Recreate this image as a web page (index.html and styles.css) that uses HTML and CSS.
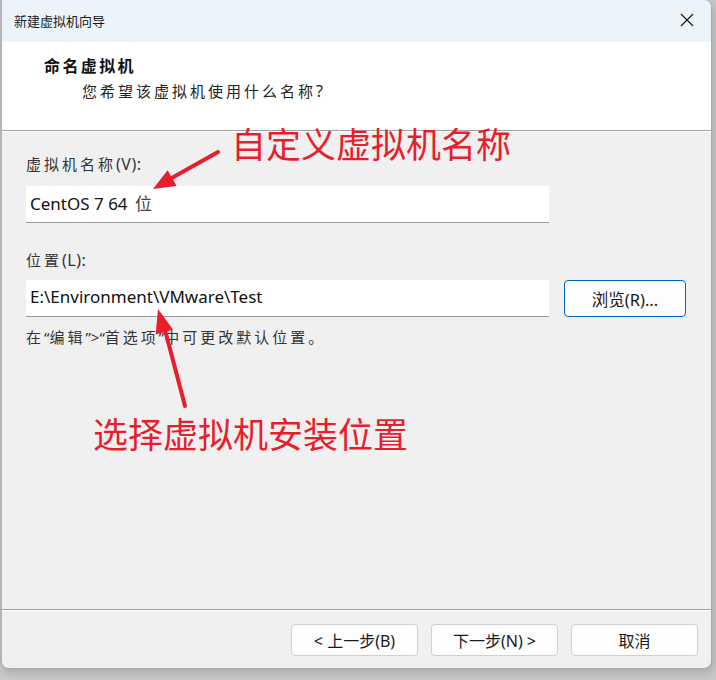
FILE: index.html
```html
<!DOCTYPE html>
<html lang="zh-CN">
<head>
  <meta charset="UTF-8">
  <title>新建虚拟机向导</title>
  <link rel="stylesheet" href="styles.css">
</head>
<body>
  <div class="window">
    <div class="titlebar">
      <span class="title">新建虚拟机向导</span>
      <svg class="close" width="14" height="14" viewBox="0 0 14 14">
        <path d="M1 1 L13 13 M13 1 L1 13" stroke="#1a1a1a" stroke-width="1.2" fill="none"/>
      </svg>
    </div>

    <div class="header">
      <div class="heading">命名虚拟机</div>
      <div class="subheading">您希望该虚拟机使用什么名称<span class="latin">?</span></div>
    </div>

    <div class="content">
      <div class="label">虚拟机名称<span class="latin">(V):</span></div>
      <div class="field">CentOS 7 64 <span class="cjk">位</span></div>

      <div class="label label-2">位置<span class="latin">(L):</span></div>
      <div class="row">
        <div class="field">E:\Environment\VMware\Test</div>
        <button class="btn browse">浏览(R)...</button>
      </div>
      <div class="hint">在<span class="q">“</span>编辑<span class="q">”&gt;“</span>首选项<span class="q">”</span>中可更改默认位置。</div>
    </div>

    <div class="footer">
      <button class="btn">&lt; 上一步(B)</button>
      <button class="btn">下一步(N) &gt;</button>
      <button class="btn">取消</button>
    </div>
  </div>

  <!-- 标注：红色文字和箭头 -->
  <div class="note note-name">自定义虚拟机名称</div>
  <div class="note note-path">选择虚拟机安装位置</div>
  <svg class="arrows" width="716" height="680" viewBox="0 0 716 680">
    <line x1="218" y1="152" x2="170" y2="179" stroke="#ea1d2c" stroke-width="4" stroke-linecap="round"/>
    <polygon points="153,189 167.6,170.3 176.6,185.9" fill="#ea1d2c"/>
    <line x1="185" y1="406" x2="165" y2="330" stroke="#ea1d2c" stroke-width="4" stroke-linecap="round"/>
    <polygon points="158,309 173.1,329.7 155.7,334.5" fill="#ea1d2c"/>
  </svg>
</body>
</html>
```

FILE: styles.css
```css
body {
  margin: 0;
  width: 716px;
  height: 680px;
  background: #c9c9c9;
  font-family: "Noto Sans", "Noto Sans CJK SC", sans-serif;
  position: relative;
  overflow: hidden;
}

.window {
  width: 712px;
  height: 669px;
  box-sizing: border-box;
  background: #f0f0f0;
  border-left: 2px solid #b4b4b4;
  border-right: 1px solid #a9a9a9;
  border-bottom: 1px solid #a9a9a9;
  border-radius: 0 8px 8px 8px;
  display: flex;
  flex-direction: column;
  overflow: hidden;
  box-shadow: 2px 4px 8px rgba(0, 0, 0, 0.15);
}

.titlebar {
  height: 42px;
  flex: none;
  background: #ebf4f8;
  display: flex;
  align-items: center;
  justify-content: space-between;
  padding: 0 17px 2px 12px;
  box-sizing: border-box;
}

.title {
  font-family: "Noto Sans CJK SC", sans-serif;
  font-size: 13px;
  color: #1a1a1a;
}

.close {
  display: block;
}

.header {
  height: 89px;
  flex: none;
  box-sizing: border-box;
  background: #ffffff;
  border-bottom: 1px solid #a0a0a0;
  box-shadow: 0 1px 0 #ffffff;
  padding: 11px 0 0 42px;
  font-family: "Noto Sans CJK SC", sans-serif;
}

.heading {
  font-size: 16px;
  font-weight: bold;
  letter-spacing: 2.4px;
  line-height: 24px;
  color: #111;
}

.subheading {
  font-size: 15px;
  letter-spacing: 3px;
  line-height: 22px;
  margin: 3px 0 0 38px;
  color: #222;
}

.latin {
  font-family: "Noto Sans", sans-serif;
  font-size: 16px;
  letter-spacing: 0.5px;
}

.content {
  flex: 1;
  padding: 23px 0 0 24px;
}

.label, .hint {
  font-family: "Noto Sans CJK SC", sans-serif;
  font-size: 15px;
  letter-spacing: 3px;
  line-height: 20px;
  color: #333;
}

.label-2 {
  margin-top: 27px;
}

.q {
  font-family: "Noto Sans", sans-serif;
  letter-spacing: 0;
}

.field {
  width: 523px;
  height: 37px;
  box-sizing: border-box;
  background: #ffffff;
  border-bottom: 1px solid #9a9a9a;
  margin-top: 12px;
  padding: 0 4px;
  font-size: 17px;
  line-height: 34px;
  color: #111;
  white-space: nowrap;
}

.cjk {
  font-family: "Noto Sans CJK SC", sans-serif;
  font-size: 17px;
  margin-left: 3px;
  color: #444;
}

.row {
  display: flex;
  gap: 15px;
  margin-top: 10px;
}

.row .field {
  margin-top: 0;
}

.hint {
  margin-top: 10px;
}

.btn {
  width: 127px;
  height: 32px;
  background: #fdfdfd;
  border: 1px solid #d0d0d0;
  border-radius: 4px;
  font-family: "Noto Sans", "Noto Sans CJK SC", sans-serif;
  font-size: 16px;
  color: #1a1a1a;
  padding: 0;
}

.browse {
  width: 122px;
  height: 37px;
  border-color: #0067c0;
  font-size: 16.5px;
}

.footer {
  flex: none;
  border-top: 1px solid #a0a0a0;
  box-shadow: inset 0 1px 0 #ffffff;
  display: flex;
  justify-content: flex-end;
  gap: 13px;
  padding: 14px 13px 12px 0;
}

.note {
  position: absolute;
  font-family: "Noto Sans CJK SC", sans-serif;
  color: #ea1d2c;
  font-size: 35px;
  line-height: 40px;
  white-space: nowrap;
}

.note-name {
  left: 231px;
  top: 123px;
}

.note-path {
  left: 93px;
  top: 413px;
}

.arrows {
  position: absolute;
  left: 0;
  top: 0;
  pointer-events: none;
}
```
